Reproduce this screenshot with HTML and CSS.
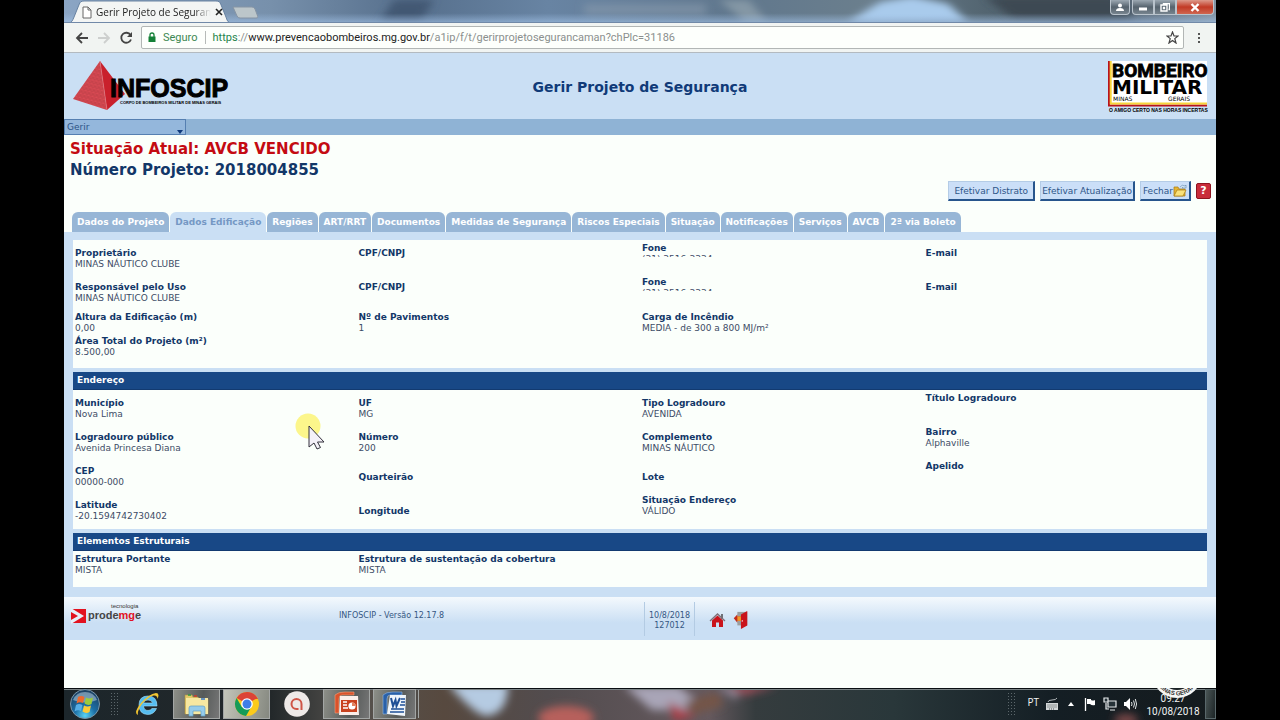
FILE: index.html
```html
<!DOCTYPE html>
<html lang="pt-BR">
<head>
<meta charset="utf-8">
<title>Gerir Projeto de Segurança</title>
<link rel="stylesheet" href="styles.css">
</head>
<body>
<div class="desktop">

<header class="titlebar">
  <svg class="backdrop" viewBox="0 0 1152 23" preserveAspectRatio="none" aria-hidden="true">
    <defs>
      <filter id="soft" x="-20%" y="-60%" width="140%" height="220%"><feGaussianBlur stdDeviation="4"/></filter>
      <linearGradient id="glass" x1="0" x2="1" y1="0" y2="0">
        <stop offset="0" stop-color="#8ba5c4"/><stop offset=".18" stop-color="#7790ab"/><stop offset=".3" stop-color="#566f8c"/><stop offset=".42" stop-color="#6884a3"/><stop offset=".58" stop-color="#60778d"/><stop offset=".7" stop-color="#6b7f8d"/><stop offset=".8" stop-color="#536571"/><stop offset=".9" stop-color="#495866"/><stop offset="1" stop-color="#8293a3"/>
      </linearGradient>
      <linearGradient id="shade" x1="0" x2="0" y1="0" y2="1">
        <stop offset=".6" stop-color="#a6c7ed" stop-opacity="0"/><stop offset="1" stop-color="#a6c7ed" stop-opacity=".55"/>
      </linearGradient>
    </defs>
    <rect width="1152" height="23" fill="url(#glass)"/>
    <g filter="url(#soft)">
      <path d="M784 23 816 2 848-4 884 4 904 23Z" fill="#a9cbec"/>
      <path d="M520 4h122v12H520z" fill="#879aac" opacity=".6"/>
      <path d="M655 0h30l18 23h-22z" fill="#8497a5"/>
      <path d="M330 0h40l-14 23h-40z" fill="#425873"/>
      <path d="M920-4h130l20 24H950z" fill="#3d4953"/>
    </g>
    <rect width="1152" height="23" fill="url(#shade)"/>
  </svg>
  <div class="browser-tab">
    <svg class="tab-shape" viewBox="0 0 174 23" preserveAspectRatio="none" aria-hidden="true"><path d="M0 23c4 0 5-3 6-5L12 4c1-2 2-3 5-3h140c3 0 4 1 5 3l6 14c1 3 2 5 6 5z" fill="#f3f5f4" stroke="#6580a0"/></svg>
    <svg class="page-icon" viewBox="0 0 10 13" aria-hidden="true"><path d="M1 1h5l3 3v8H1zM6 1v3h3" fill="#fff" stroke="#666"/></svg>
    <span class="tab-title">Gerir Projeto de Seguran</span>
    <button class="tab-close" aria-label="Fechar guia"><svg viewBox="0 0 8 8"><path d="m1 1 6 6M7 1 1 7" stroke="#222" stroke-width="1.6"/></svg></button>
  </div>
  <button class="new-tab" aria-label="Nova guia"><svg viewBox="0 0 26 13"><path d="M1 1h19q2 0 3 2l3 8q0 1-2 1H8q-2 0-3-2z" fill="#bcc6ca" stroke="#8694a4"/></svg></button>
  <div class="window-buttons">
    <button class="user" aria-label="Usuário"><svg viewBox="0 0 10 9"><circle cx="5" cy="2.5" r="2" fill="#fff"/><path d="M1 8q0-3 4-3t4 3z" fill="#fff"/></svg></button>
    <button class="min" aria-label="Minimizar"><svg viewBox="0 0 10 9"><path d="M1 4.500h8v3H1z" fill="#fff"/></svg></button>
    <button class="max" aria-label="Restaurar"><svg viewBox="0 0 10 9"><path d="M3.500 1.500V.5h6v6h-1M1 2h6v6H1zM3.500 4.500h1v1h-1z" fill="none" stroke="#fff" stroke-width="1.400"/></svg></button>
    <button class="close" aria-label="Fechar"><svg viewBox="0 0 10 9"><path d="m1.500 1 7 7M8.500 1l-7 7" stroke="#fff" stroke-width="2.400"/></svg></button>
  </div>
</header>

<div class="toolbar">
  <button class="nav-btn" aria-label="Voltar"><svg viewBox="0 0 14 14"><path d="M13 7H2M7 2 2 7l5 5" fill="none" stroke="#444" stroke-width="1.800"/></svg></button>
  <button class="nav-btn" aria-label="Avançar"><svg viewBox="0 0 14 14"><path d="M1 7h11M7 2l5 5-5 5" fill="none" stroke="#cdcfce" stroke-width="1.800"/></svg></button>
  <button class="nav-btn" aria-label="Recarregar"><svg viewBox="0 0 14 14"><path d="M11.500 4A5 5 0 1 0 12 8.500" fill="none" stroke="#444" stroke-width="1.800"/><path d="M13 1v5H8z" fill="#444"/></svg></button>
  <div class="address">
    <svg class="lock" viewBox="0 0 8 11" aria-hidden="true"><path d="M2 5V3q0-2 2-2t2 2v2" fill="none" stroke="#148037" stroke-width="1.300"/><path d="M.5 4.500h7V10h-7z" fill="#148037"/></svg>
    <span class="secure">Seguro</span>
    <span class="url"><span class="scheme">https</span>://<span class="host">www.prevencaobombeiros.mg.gov.br</span>/a1ip/f/t/gerirprojetosegurancaman?chPlc=31186</span>
    <button class="star" aria-label="Favorito"><svg viewBox="0 0 13 13"><path d="m6.500 1 1.500 4h4L8.800 7.600 10 12 6.500 9.400 3 12l1.200-4.400L1 5h4z" fill="none" stroke="#444" stroke-width="1.200"/></svg></button>
  </div>
  <button class="dots" aria-label="Menu"><svg viewBox="0 0 4 12"><path d="M1 1h2v2H1zM1 5h2v2H1zM1 9h2v2H1z" fill="#555"/></svg></button>
</div>

<main class="page">
  <div class="banner">
    <svg class="infoscip" viewBox="0 0 158 54" role="img" aria-label="INFOSCIP">
      <defs><pattern id="brick" width="4" height="4" patternUnits="userSpaceOnUse" patternTransform="rotate(14)"><rect width="4" height="4" fill="#db4a54"/><path d="M0 0h4M0 2h4M1 0v2M3 2v2" stroke="#b23a43" stroke-width=".6"/></pattern></defs>
      <path d="M28 2 1 40l34 11z" fill="url(#brick)"/>
      <path d="M28 2 35 51 53 35z" fill="#c9202c"/>
      <path d="m28 2 7 49" stroke="#e88086" stroke-width=".6"/>
      <text x="38" y="38" class="logo-name">INFOSCIP</text>
      <text x="48" y="45" class="logo-sub">CORPO DE BOMBEIROS MILITAR DE MINAS GERAIS</text>
    </svg>
    <h1>Gerir Projeto de Segurança</h1>
    <svg class="bombeiro" viewBox="0 0 100 53" role="img" aria-label="Bombeiro Militar Minas Gerais">
      <path d="M1 1h98v45H1z" fill="#fff"/>
      <path d="M1 1v44.500h98" fill="none" stroke="#b8131d" stroke-width="2"/>
      <path d="M2.700 1v42.500H99" fill="none" stroke="#f7d53a" stroke-width="2"/>
      <text x="4" y="17" class="bm-top">BOMBEIRO</text>
      <text x="4" y="34" class="bm-mid">MILITAR</text>
      <text x="5" y="41" class="bm-state">MINAS</text><text x="60" y="41" class="bm-state">GERAIS</text>
      <text x="1" y="51.500" class="bm-motto">O AMIGO CERTO NAS HORAS INCERTAS</text>
    </svg>
  </div>

  <nav class="menubar"><button class="menu-item">Gerir<svg viewBox="0 0 6 4" aria-hidden="true"><path d="M0 0h6L3 4z" fill="#103a7c"/></svg></button></nav>

  <div class="status">
    <p class="situation">Situação Atual: AVCB VENCIDO</p>
    <p class="project">Número Projeto: 2018004855</p>
  </div>
  <div class="actions">
    <button class="action">Efetivar Distrato</button>
    <button class="action snug">Efetivar Atualização</button>
    <button class="action close-page">Fechar<svg viewBox="0 0 14 13" aria-hidden="true"><path d="M1 11V3h4l1 2h6v7H1z" fill="#e5b532" stroke="#a87812" stroke-width=".7"/><path d="m1 12 3-6h9l-3 6z" fill="#fae27a" stroke="#a87812" stroke-width=".7"/><path d="M7 3q2-3 5-1l1-1v3H9l1-1" fill="#d3e5f4" stroke="#5f88ac" stroke-width=".6"/></svg></button>
    <button class="help" aria-label="Ajuda">?</button>
  </div>

  <nav class="tabs">
    <a href="#">Dados do Projeto</a>
    <a href="#" class="active" aria-current="page">Dados Edificação</a>
    <a href="#">Regiões</a>
    <a href="#">ART/RRT</a>
    <a href="#">Documentos</a>
    <a href="#">Medidas de Segurança</a>
    <a href="#">Riscos Especiais</a>
    <a href="#">Situação</a>
    <a href="#">Notificações</a>
    <a href="#">Serviços</a>
    <a href="#">AVCB</a>
    <a href="#">2ª via Boleto</a>
  </nav>

  <div class="content">
    <section class="panel general">
      <dl class="row">
        <div class="field"><dt>Proprietário</dt><dd>MINAS NÁUTICO CLUBE</dd></div>
        <div class="field"><dt>CPF/CNPJ</dt></div>
        <div class="field raised"><dt>Fone</dt><dd class="cut">(31) 3516-3334</dd></div>
        <div class="field"><dt>E-mail</dt></div>
      </dl>
      <dl class="row compact">
        <div class="field"><dt>Responsável pelo Uso</dt><dd>MINAS NÁUTICO CLUBE</dd></div>
        <div class="field"><dt>CPF/CNPJ</dt></div>
        <div class="field raised"><dt>Fone</dt><dd class="cut">(31) 3516-3334</dd></div>
        <div class="field"><dt>E-mail</dt></div>
      </dl>
      <dl class="row dense">
        <div class="field"><dt>Altura da Edificação (m)</dt><dd>0,00</dd></div>
        <div class="field"><dt>Nº de Pavimentos</dt><dd>1</dd></div>
        <div class="field"><dt>Carga de Incêndio</dt><dd>MEDIA - de 300 a 800 MJ/m²</dd></div>
      </dl>
      <dl class="row">
        <div class="field"><dt>Área Total do Projeto (m²)</dt><dd>8.500,00</dd></div>
      </dl>
    </section>

    <section class="panel location">
      <h2>Endereço</h2>
      <dl class="row">
        <div class="field"><dt>Município</dt><dd>Nova Lima</dd></div>
        <div class="field"><dt>UF</dt><dd>MG</dd></div>
        <div class="field"><dt>Tipo Logradouro</dt><dd>AVENIDA</dd></div>
        <div class="field raised"><dt>Título Logradouro</dt></div>
      </dl>
      <dl class="row">
        <div class="field"><dt>Logradouro público</dt><dd>Avenida Princesa Diana</dd></div>
        <div class="field"><dt>Número</dt><dd>200</dd></div>
        <div class="field"><dt>Complemento</dt><dd>MINAS NÁUTICO</dd></div>
        <div class="field raised"><dt>Bairro</dt><dd>Alphaville</dd></div>
      </dl>
      <dl class="row">
        <div class="field"><dt>CEP</dt><dd>00000-000</dd></div>
        <div class="field lowered"><dt>Quarteirão</dt></div>
        <div class="field lowered"><dt>Lote</dt></div>
        <div class="field raised"><dt>Apelido</dt></div>
      </dl>
      <dl class="row">
        <div class="field"><dt>Latitude</dt><dd>-20.1594742730402</dd></div>
        <div class="field lowered"><dt>Longitude</dt></div>
        <div class="field raised"><dt>Situação Endereço</dt><dd>VÁLIDO</dd></div>
      </dl>
    </section>

    <section class="panel">
      <h2>Elementos Estruturais</h2>
      <dl class="row">
        <div class="field raised"><dt>Estrutura Portante</dt><dd>MISTA</dd></div>
        <div class="field raised"><dt>Estrutura de sustentação da cobertura</dt><dd>MISTA</dd></div>
      </dl>
    </section>
  </div>

  <footer class="page-footer">
    <svg class="prodemge" viewBox="0 0 78 22" role="img" aria-label="tecnologia prodemge">
      <path d="M0 7h15v14H0z" fill="#e2121f"/><path d="m0 6 13 8L0 22v-4l7-4-7-4z" fill="#e6f0fa"/>
      <text x="40" y="6" class="pd-small">tecnologia</text>
      <text x="17" y="17" class="pd-name">prode<tspan fill="#e2121f">mg</tspan>e</text>
    </svg>
    <span class="version">INFOSCIP - Versão 12.17.8</span>
    <span class="stamp">10/8/2018<br>127012</span>
    <a href="#" aria-label="Início"><svg viewBox="0 0 17 16"><path d="M12 2h2v5h-2z" fill="#6d7077"/><path d="M3 8.500 8.500 3.500 14 8.500V15h-4v-4.500H7V15H3z" fill="#c9131b"/><path d="m1 9 7.500-7L16 9" fill="none" stroke="#7d6f76" stroke-width="1.300"/></svg></a>
    <a href="#" aria-label="Sair"><svg viewBox="0 0 17 20"><path d="M5 1h11v15H5z" fill="#9b9e9f"/><path d="m9 4 7-4v16l-7 4z" fill="#c9131b"/><path d="m1 8 4-4v2h4v5H5v2z" fill="#c42b1b"/><path d="M5 6h4v5H5z" fill="#f29a27"/><circle cx="10.500" cy="11" r=".8" fill="#fff"/></svg></a>
  </footer>
</main>

<footer class="taskbar">
  <svg class="backdrop" viewBox="0 0 1152 32" preserveAspectRatio="none" aria-hidden="true">
    <defs><linearGradient id="dark" x1="0" x2="1" y1="0" y2="0"><stop offset="0" stop-color="#1c262b"/><stop offset=".18" stop-color="#23282a"/><stop offset=".25" stop-color="#55524e"/><stop offset=".33" stop-color="#57493f"/><stop offset=".42" stop-color="#524c4e"/><stop offset=".56" stop-color="#65595e"/><stop offset=".6" stop-color="#353c3e"/><stop offset=".72" stop-color="#29373a"/><stop offset=".86" stop-color="#141e24"/><stop offset="1" stop-color="#151b1e"/></linearGradient></defs>
    <rect width="1152" height="32" fill="url(#dark)"/>
    <g filter="url(#soft)">
      <path d="M384-4h60q0 30-22 32-12-2-38-32z" fill="#b5cbe2"/>
      <ellipse cx="502" cy="30" rx="28" ry="12" fill="#b7605c"/>
      <path d="M560-2h54l16 12-8 12h-34z" fill="#a9a5b7"/>
      <path d="m604 14 28 14-22 6z" fill="#a8414a"/>
      <path d="M620 14 655 4l4 14-30 8z" fill="#755547"/>
      <path d="M652-2h26l-6 14z" fill="#8e8494"/>
      <path d="M664-2h50l-34 9z" fill="#a6505c"/>
      <ellipse cx="1062" cy="32" rx="12" ry="6" fill="#7d4a48"/>
    </g>
    <path d="M0 .5h1152" stroke="#0a0f12"/><path d="M0 1.500h1152" stroke="#7b8486"/>
  </svg>
  <button class="orb" aria-label="Iniciar"><svg viewBox="0 0 32 32">
    <defs><radialGradient id="orb" cx=".5" cy=".9" r=".9"><stop offset="0" stop-color="#59d4f5"/><stop offset=".4" stop-color="#1c6fa6"/><stop offset="1" stop-color="#1d3d5c"/></radialGradient></defs>
    <circle cx="16" cy="16" r="14.500" fill="url(#orb)" stroke="#7996a8"/><path d="M4 12A13 13 0 0 1 28 12Q16 17 4 12z" fill="#c8dce8" opacity=".5"/>
    <path d="M9 9q3-2 6.500 0l-1.500 6q-3-1.500-6.500.5z" fill="#ed6a2e"/><path d="M17 9.500q3 2 7 0l-1.500 6.500q-3.500 2-7-.5z" fill="#9ccb3c"/><path d="M7 17q3-2 6.500 0L12 23q-3-1.500-6.500.5z" fill="#57aee5"/><path d="M15 17.500q3.500 2 7 0L20.500 24q-3.500 2-7-.5z" fill="#fccb37"/>
  </svg></button>
  <span class="grip"></span>
  <button class="task plain" aria-label="Internet Explorer"><svg viewBox="0 0 26 26"><path d="M23 15H9.500q.5 4.500 4.500 4.500 2.500 0 4-2h4.500Q20 23.500 13.500 23.500 5 23 5 14T14 5q9 0 9 10zm-4.500-3Q18 9 14 9t-4.500 3z" fill="#56bdf0" stroke="#a5e0fb" stroke-width=".6"/><path d="M4 24Q-1 22 7 12 15 3 22 2q4 0 1.500 6 0-4-4-3.500Q14 6 8 13q-5 7-4 11z" fill="#f3c631"/></svg></button>
  <button class="task" aria-label="Explorador de arquivos"><svg viewBox="0 0 26 26"><path d="M1 4h7l1 2h5l1 2h9v15H1z" fill="#e4c968" stroke="#b09544" stroke-width=".6"/><path d="M2 7h22v16H2z" fill="#f7e8a1"/><path d="M4 4h3" stroke="#2c9a43" stroke-width="1.500"/><path d="M10 5h3" stroke="#cf3c2c" stroke-width="1.500"/><path d="M17 8h4" stroke="#3776c8" stroke-width="1.500"/><path d="M5 25v-8q0-2 2-2h12q2 0 2 2v8h-4v-5H9v5z" fill="#95cceb" stroke="#5f9ec4" stroke-width=".7"/></svg></button>
  <button class="task current" aria-label="Google Chrome"><svg viewBox="0 0 26 26"><circle cx="13" cy="13" r="12" fill="#fbca1c"/><path d="M13 13 2.600 7A12 12 0 0 1 23.400 7z" fill="#db4437"/><path d="M13 7h10.400L24 8z" fill="#db4437"/><path d="M2.600 7A12 12 0 0 0 12 25l5.500-9.500L13 13l-5.200 3z" fill="#159b58"/><circle cx="13" cy="13" r="5.800" fill="#fff"/><circle cx="13" cy="13" r="4.500" fill="#3e7ee8"/></svg></button>
  <button class="task plain" aria-label="Gravador"><svg viewBox="0 0 26 26"><circle cx="13" cy="13" r="12.800" fill="#eee9e7"/><path d="M17.500 19v-6a5 5 0 1 0-5 5h2" fill="none" stroke="#cf5547" stroke-width="2"/></svg></button>
  <button class="task" aria-label="PowerPoint"><svg viewBox="0 0 26 26"><path d="M1 4q3-3 10-3h9v3H8Q5 4 5 8v14H1z" fill="#d9532c" stroke="#f3a27c" stroke-width=".6"/><path d="M6 5h18l1 19H5z" fill="#fbeee9"/><path d="M7 9h16v12H7z" fill="#c9421e"/><path d="M9 11h4M9 14h4M9 17h5" stroke="#fff" stroke-width="1.500"/><circle cx="18" cy="15" r="3.600" fill="#fff"/><path d="M18 15v-3.600a3.600 3.600 0 0 1 3.600 3.600z" fill="#e2835f"/></svg></button>
  <button class="task stacked" aria-label="Word"><svg viewBox="0 0 26 26"><path d="M1 4q3-3 10-3h9v3H8Q5 4 5 8v15H1z" fill="#2a61a9" stroke="#94b9e2" stroke-width=".6"/><path d="M8 4h16l-1 21-18-2z" fill="#eff5fb"/><path d="m9 7 2 8 2.500-6 1 6L18 7" fill="none" stroke="#1e4f96" stroke-width="2"/><path d="M19 8h4M19 11h4M18 14h5M9 18h13M8 21h14" stroke="#1e4f96" stroke-width="1.500"/></svg></button>

  <div class="tray">
    <span class="grip"></span>
    <span class="lang">PT</span>
    <svg class="tray-icon" viewBox="0 0 14 14" aria-hidden="true"><path d="M1 6h12v7H1z" fill="#d3d7d8"/><path d="M2.500 8h9M2.500 10h9M4 12h6" stroke="#4b5356" stroke-dasharray="1 1"/><path d="M3 5q0-2 4-2 4 0 5-2" fill="none" stroke="#b3b8ba"/></svg>
    <svg class="tray-arrow" viewBox="0 0 6 4" aria-hidden="true"><path d="m3 0 3 4H0z" fill="#fff"/></svg>
    <svg class="tray-icon" viewBox="0 0 14 14" aria-hidden="true"><path d="M2.500 1v13" stroke="#fff" stroke-width="1.300"/><path d="M4 2h4v1q2 1 4 0v5q-3 1-5-1H4z" fill="#fff"/></svg>
    <svg class="tray-icon" viewBox="0 0 14 14" aria-hidden="true"><path d="M5 4h8v6H5zM7 13h5M3 6v6h3M1 1h4v4H1z" fill="#263238" stroke="#e6eaeb" stroke-width="1.200"/></svg>
    <svg class="tray-icon" viewBox="0 0 14 14" aria-hidden="true"><path d="M1 5h2l4-4v12L3 9H1z" fill="#fff"/><path d="M8.500 5q1 2 0 4M10.500 3.500q2 3.500 0 7M12.300 2q2.500 5 0 10" fill="none" stroke="#dfe3e4"/></svg>
    <div class="clock"><span>09:27</span><span>10/08/2018</span>
      <svg class="seal" viewBox="0 0 52 12" aria-hidden="true"><path id="ring" d="M3.500-15a22.500 22.500 0 0 0 45 0" fill="none"/><circle cx="26" cy="-15" r="25" fill="#f5f6f5"/><text class="seal-text"><textPath href="#ring" startOffset="50%" text-anchor="middle">MINAS GERAIS</textPath></text><circle cx="26" cy="-15" r="17" fill="#1c2427"/></svg>
    </div>
    <button class="show-desktop" aria-label="Mostrar área de trabalho"></button>
  </div>
</footer>

<svg class="pointer" viewBox="0 0 30 38" aria-hidden="true"><circle cx="13" cy="13" r="12.500" fill="#fbf577" opacity=".85"/><path d="M14 13v21l5-4 3 6 3.500-1.500L22.500 29H29z" fill="#f4f1f8" stroke="#33313c"/></svg>
</div>
</body>
</html>
```
FILE: styles.css
```css
* { box-sizing: border-box; }
body { margin: 0; background: #000; font-family: Verdana, "DejaVu Sans", sans-serif; }
button { font: inherit; margin: 0; padding: 0; border: 0; background: none; color: inherit; }
svg { display: block; }
p, h1, h2, dl, dd { margin: 0; }
a { color: inherit; text-decoration: none; }

.desktop { width: 90%; min-height: 100vh; margin: 0 auto; display: flex; flex-direction: column; position: relative; background: #fbfffb; }
.backdrop { position: absolute; inset: 0; width: 100%; height: 100%; }

/* Browser window */
.titlebar { height: 23px; display: flex; position: relative; padding-left: 4px; border-bottom: 1px solid #7189a8; overflow: hidden; }
.browser-tab { width: 164px; height: 23px; position: relative; display: flex; align-items: center; padding: 1px 13px 0 14px; gap: 4px; }
.tab-shape { position: absolute; left: 0; top: 0; width: 100%; height: 23px; }
.page-icon { position: relative; width: 10px; height: 13px; flex: none; }
.tab-title { position: relative; flex: 1; white-space: nowrap; font: 10px "Open Sans", sans-serif; color: #222; mask-image: linear-gradient(90deg, #000 85%, transparent); }
.tab-close { position: relative; }
.tab-close svg { width: 8px; height: 8px; }
.new-tab { position: relative; align-self: flex-start; padding-top: 6px; }
.new-tab svg { width: 26px; height: 13px; }
.window-buttons { position: relative; margin-left: auto; display: flex; height: 15px; padding-right: 2px; }
.window-buttons button { width: 22px; display: grid; place-items: center; border: 1px solid #b9c3cc; border-top: 0; background: linear-gradient(#9ca8b2, #56636e 50%, #77848e); }
.window-buttons svg { width: 10px; height: 9px; }
.window-buttons .user { width: 20px; margin-right: 2px; border-radius: 0 0 4px 4px; }
.window-buttons .min { border-radius: 0 0 0 4px; }
.window-buttons .close { width: 38px; border-radius: 0 0 4px 0; background: linear-gradient(#dd9a8b, #c23a25 50%, #cf6650); }

.toolbar { height: 30px; display: flex; align-items: center; gap: 8px; padding: 0 15px 0 11px; background: #f1f4f2; border-bottom: 1px solid #b3bac0; }
.nav-btn svg { width: 14px; height: 14px; }
.address { flex: 1; height: 23px; display: flex; align-items: center; padding: 0 4px 0 6px; background: #fdfffc; border: 1px solid #b2b6b5; border-radius: 2px; font: 11px Roboto, sans-serif; color: #8b8f8e; white-space: nowrap; }
.lock { width: 8px; height: 11px; margin-right: 7px; }
.secure { color: #3c8752; padding-right: 7px; border-right: 1px solid #b6bab8; line-height: 13px; margin-right: 7px; }
.scheme { color: #25844a; }
.host { color: #222; }
.star { margin-left: auto; }
.star svg { width: 13px; height: 13px; }
.dots { padding-left: 5px; }
.dots svg { width: 4px; height: 12px; }

/* Application */
.page { flex: 1; color: #123768; }
.banner { height: 66px; display: grid; grid-template-columns: 1fr auto 1fr; align-items: center; padding: 0 8px; background: #cadff4; }
.banner h1 { font-size: 14px; line-height: 20px; padding-top: 2px; color: #103a78; }
.infoscip { width: 158px; height: 54px; }
.bombeiro { width: 100px; height: 53px; justify-self: end; }
.logo-name { font: bold 25px "Liberation Sans", sans-serif; stroke: #000; stroke-width: 1; }
.logo-sub { font: bold 4px "Liberation Sans", sans-serif; }
.bm-top { font: bold 19px Roboto, sans-serif; stroke: #000; stroke-width: .8; }
.bm-mid { font: bold 20px "DejaVu Sans", sans-serif; }
.bm-state { font: 6px "DejaVu Sans", sans-serif; }
.bm-motto { font: bold 5px "Liberation Sans", sans-serif; }

.menubar { height: 16px; background: #8fb3d5; }
.menu-item { width: 122px; height: 16px; display: flex; align-items: center; justify-content: space-between; padding: 0 2px; border: 1px solid #557fb1; background: #94b7dc; font-size: 9px; color: #2c5386; }
.menu-item svg { width: 6px; height: 4px; align-self: flex-end; }

.status { padding: 4px 6px 0; font-size: 15px; line-height: 21px; font-weight: bold; }
.situation { color: #c40b12; }
.actions { display: flex; justify-content: flex-end; align-items: center; gap: 5px; padding: 0 5px; }
.action { height: 20px; padding: 0 5px; border: 1px solid #b4cce6; border-right: 2px solid #27558c; border-bottom: 2px solid #27558c; background: #cbdff8; font-size: 9px; color: #2e5688; }
.snug { padding: 0 1px; }
.close-page { display: flex; align-items: center; padding: 0 2px; }
.close-page svg { width: 14px; height: 13px; }
.help { width: 15px; height: 16px; border: 1px solid #8e1520; border-radius: 2px; background: #c92c3a; color: #fff; font-size: 11px; line-height: 14px; font-weight: bold; }

.tabs { display: flex; gap: 1px; padding: 11px 8px 0; }
.tabs a { height: 20px; padding: 0 5px; border-radius: 6px 6px 0 0; background: #97b6d6; color: #fff; font-size: 9px; line-height: 21px; font-weight: bold; white-space: nowrap; }
.tabs .active { background: #cadff4; color: #7598c4; }

.content { display: flex; flex-direction: column; gap: 4px; padding: 8px 9px 10px; background: #cadff4; }
.panel { background: #fbfffb; }
.panel h2 { margin-bottom: 2px; padding: 0 4px; background: #184886; color: #fff; font-size: 9px; line-height: 17px; border: 1px solid #123a70; border-width: 0 0 1px; }
.row { display: grid; grid-template-columns: repeat(4, 1fr); min-height: 34px; font-size: 9px; line-height: 11px; }
.general { padding: 2px 0 4px; }
.location { padding-bottom: 1px; }
.compact { min-height: 30px; }
.dense { height: 24px; min-height: 0; }
.field { padding: 6px 2px 0; }
.raised { padding-top: 1px; }
.lowered { padding-top: 12px; }
.field dt { font-weight: bold; }
.field dd { color: #3d4c66; }
.field .cut { height: 3px; overflow: hidden; }

.page-footer { height: 43px; display: flex; align-items: flex-start; padding: 5px 7px; background: linear-gradient(#f4f9fd, #cadff4 60%); font-size: 8px; line-height: 10px; color: #355783; }
.prodemge { width: 78px; height: 22px; }
.pd-small { font: 6px "Liberation Sans", sans-serif; fill: #333; }
.pd-name { font: bold 11px "Liberation Sans", sans-serif; fill: #454545; }
.version { flex: 0 0 307px; padding: 9px 0 0 190px; margin-right: 188px; white-space: nowrap; }
.stamp { flex: none; width: 51px; height: 34px; padding-top: 9px; margin-right: 14px; border: 1px solid #b3cbe3; border-width: 0 1px; text-align: center; }
.page-footer a { padding: 9px 6px 0 0; }
.page-footer a svg { width: 17px; height: 18px; }

/* Taskbar */
.taskbar { height: 32px; position: relative; display: flex; align-items: center; gap: 3px; padding: 0 0 0 5px; overflow: hidden; }
.orb { position: relative; margin-right: 6px; }
.orb svg { width: 32px; height: 32px; }
.grip { position: relative; width: 10px; height: 24px; background: radial-gradient(circle, #5c676b 1px, transparent 1px) 0 0 / 3px 3px; }
.task { position: relative; width: 47px; height: 30px; display: grid; place-items: center; border: 1px solid #a3a6a5; background: linear-gradient(100deg, #8d8f88, #565a59 60%, #777); }
.task svg { width: 26px; height: 26px; }
.plain { border-color: transparent; background: none; }
.current { background: linear-gradient(100deg, #c3c5b9, #858880); }
.stacked { width: 43px; box-shadow: 3px 0 0 -1px #4f4b47, 4px 0 0 -1px #a3a6a5; }
.tray { position: relative; margin-left: auto; display: flex; align-items: center; gap: 6px; height: 32px; color: #f2f4f4; font: 10px "Open Sans", sans-serif; }
.lang { padding: 0 0 4px 4px; }
.tray-icon { width: 14px; height: 14px; }
.tray-arrow { width: 6px; height: 4px; margin: 0 3px; }
.clock { position: relative; height: 32px; width: 60px; display: flex; flex-direction: column; align-items: center; padding-top: 4px; line-height: 13px; font-size: 10px; font-family: Roboto, sans-serif; white-space: nowrap; }
.seal { position: absolute; top: 0; left: 8px; width: 52px; height: 12px; overflow: hidden; }
.seal-text { font: bold 6px "Liberation Sans", sans-serif; fill: #333; }
.show-desktop { width: 11px; height: 30px; margin-left: -4px; border: 1px solid #59676a; background: linear-gradient(100deg, #4a5555, #1c2426); }

.pointer { position: absolute; left: 231px; top: 413px; width: 30px; height: 38px; }
```
